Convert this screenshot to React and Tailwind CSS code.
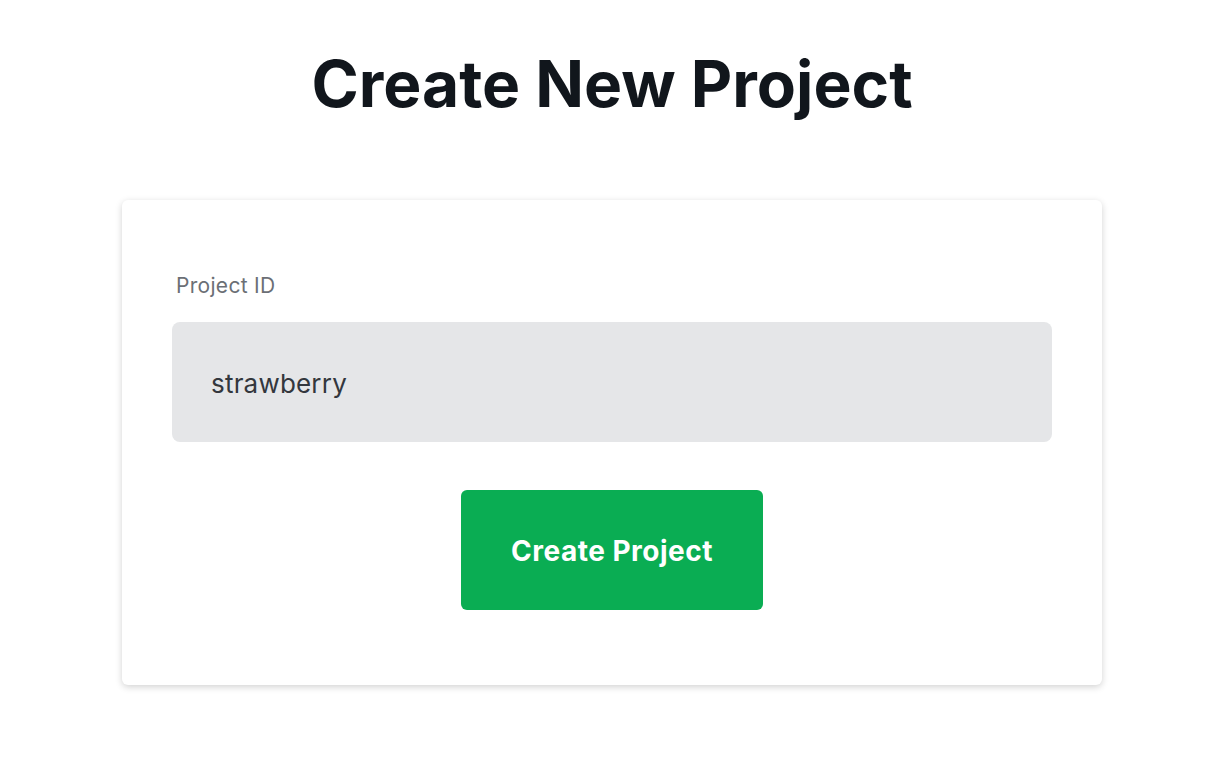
export default function App() {
  return (
    <div className="min-h-[772px] w-full bg-white flex flex-col items-center pr-[4px]" style={{ fontFamily: 'Inter, "Noto Sans", sans-serif' }}>
      <h1 className="mt-[44px] text-[64px] leading-[80px] font-bold text-[#11161c] tracking-[0px]">Create New Project</h1>
      <div className="mt-[76px] w-[980px] bg-white rounded-[6px] shadow-[0_2px_7px_rgba(0,0,0,0.18)] px-[50px] pt-[72px] pb-[75px] flex flex-col">
        <label className="ml-[4px] text-[21px] leading-[28px] text-[#6b6f75] tracking-[0.3px]">Project ID</label>
        <div className="mt-[22px] h-[120px] rounded-[8px] bg-[#e5e6e8] flex items-center pl-[39px] pt-[3px]">
          <span className="text-[26px] text-[#33373d] tracking-[0.2px]">strawberry</span>
        </div>
        <div className="mt-[48px] flex justify-center">
          <button className="w-[302px] h-[120px] rounded-[6px] bg-[#0aad53] text-white text-[28px] font-bold tracking-[0.5px] pt-[2px]">Create Project</button>
        </div>
      </div>
    </div>
  );
}
